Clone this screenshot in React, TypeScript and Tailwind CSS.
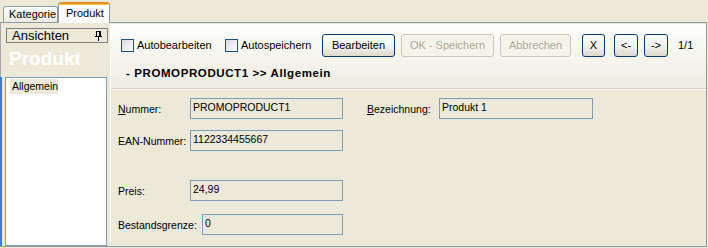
import React from "react";

const font = { fontFamily: '"Liberation Sans", Arial, sans-serif' };

function Checkbox({ label, width }: { label: string; width: string }) {
  return (
    <div className={`flex items-center ${width}`}>
      <div className="w-[13px] h-[13px] border border-[#1C5180] bg-gradient-to-br from-[#DCDBD5] to-[#FFFFFF]" />
      <span className="ml-[3px] text-[11px] leading-[13px] text-black">{label}</span>
    </div>
  );
}

function Btn({ children, w, disabled }: { children: React.ReactNode; w: string; disabled?: boolean }) {
  return (
    <div
      className={`${w} h-[23px] rounded-[3px] border flex items-center justify-center text-[11px] leading-[13px] ${
        disabled
          ? "border-[#C9C7BA] text-[#ACA899] bg-[#F5F4EA]"
          : "border-[#003C74] text-black bg-gradient-to-b from-[#FFFFFF] via-[#F4F3EE] to-[#DCD9CD]"
      }`}
    >
      {children}
    </div>
  );
}

function Field({ value, w }: { value: string; w: string }) {
  return (
    <div className={`${w} h-[21px] border border-[#7F9DB9] bg-[#ECE9D8] pl-[2px] pt-[2px] text-[10.5px] leading-[13px] text-black`}>
      {value}
    </div>
  );
}

export default function App() {
  return (
    <div className="w-[708px] h-[248px] bg-[#ECE9D8] text-black overflow-hidden" style={font}>
      {/* Tabs */}
      <div className="h-[22px] flex items-end pl-[3px]">
        <div className="w-[55px] h-[16px] border border-b-0 border-[#919B9C] rounded-t-[3px] bg-gradient-to-b from-[#FFFFFF] to-[#ECEBE6] text-[11px] leading-[14px] pl-[5px]">
          Kategorie
        </div>
        <div className="relative z-10 -mb-px w-[52px] h-[21px] border-x border-[#919B9C] rounded-t-[3px] bg-[#FCFCFE] overflow-hidden">
          <div className="h-[2px] bg-[#E68B2C]" />
          <div className="h-[1px] bg-[#FFC73C]" />
          <div className="text-[11px] leading-[14px] pl-[7px] pt-[1px]">Produkt</div>
        </div>
      </div>

      {/* Tab page */}
      <div className="w-[707px] h-[225px] border-t border-r border-b border-[#919B9C] flex">
        {/* Left column */}
        <div className="w-[110px] flex flex-col">
          <div className="border-l border-[#A7A6AA] pl-[5px] pt-[5px] pr-[2px]">
            <div className="w-[102px] h-[15px] border border-[#808080] flex items-center justify-between pl-[5px] pr-[5px]">
              <span className="text-[13px] leading-[13px]">Ansichten</span>
              <svg width="7" height="10" viewBox="0 0 7 10">
                <rect x="1.5" y="0.5" width="4" height="5" fill="none" stroke="#000" />
                <rect x="0" y="5" width="7" height="1" fill="#000" />
                <rect x="3" y="6" width="1" height="4" fill="#000" />
                <rect x="4" y="1" width="1" height="4" fill="#000" />
              </svg>
            </div>
            <div className="pt-[5px] pl-[3px] h-[34px] text-[19px] leading-[22px] font-bold text-white">Produkt</div>
          </div>
          <div className="flex-1 flex border-l-2 border-[#3D78DA]">
            <div className="ml-[3px] w-[102px] h-full border border-[#7F9DB9] bg-[#FFFFFF] pt-[1px] pl-[4px]">
              <div className="w-[48px] h-[15px] bg-[#ECE9D8] text-[10.5px] leading-[15px] pl-[2px]">Allgemein</div>
            </div>
          </div>
        </div>

        {/* Right panel */}
        <div className="flex-1 flex flex-col border-l border-t border-[#FFFFFF] mt-[1px]">
          <div className="h-[63px] bg-gradient-to-b from-[#FDFDFB] to-[#EFEDE2] pt-[9px]">
            <div className="flex items-center h-[23px]">
              <div className="w-[10px]" />
              <Checkbox label="Autobearbeiten" width="w-[104px]" />
              <Checkbox label="Autospeichern" width="w-[97px]" />
              <Btn w="w-[73px]">Bearbeiten</Btn>
              <div className="w-[6px]" />
              <Btn w="w-[93px]" disabled>OK - Speichern</Btn>
              <div className="w-[6px]" />
              <Btn w="w-[71px]" disabled>Abbrechen</Btn>
              <div className="w-[11px]" />
              <Btn w="w-[23px]">X</Btn>
              <div className="w-[9px]" />
              <Btn w="w-[24px]">&lt;-</Btn>
              <div className="w-[6px]" />
              <Btn w="w-[24px]">-&gt;</Btn>
              <span className="ml-[10px] text-[11px] leading-[13px]">1/1</span>
            </div>
            <div className="mt-[10px] pl-[15px] text-[11.5px] leading-[13px] font-bold tracking-[0.6px]">- PROMOPRODUCT1 &gt;&gt; Allgemein</div>
          </div>
          <div className="h-[1px] bg-[#D4D0C0]" />
          <div className="h-[1px] bg-[#FFFFFF]" />

          {/* Form */}
          <div className="flex-1 pl-[7px] pt-[8px] text-[10.5px] leading-[13px]">
            <div className="flex items-start">
              <div className="w-[72px] pt-[5px]">
                <span className="underline">N</span>ummer:
              </div>
              <Field value="PROMOPRODUCT1" w="w-[153px]" />
              <div className="w-[24px]" />
              <div className="w-[72px] pt-[5px]">
                <span className="underline">B</span>ezeichnung:
              </div>
              <Field value="Produkt 1" w="w-[154px]" />
            </div>
            <div className="flex items-start mt-[11px]">
              <div className="w-[72px] pt-[5px]">EAN-Nummer:</div>
              <Field value="1122334455667" w="w-[153px]" />
            </div>
            <div className="flex items-start mt-[29px]">
              <div className="w-[72px] pt-[5px]">Preis:</div>
              <Field value="24,99" w="w-[153px]" />
            </div>
            <div className="flex items-start mt-[13px]">
              <div className="w-[84px] pt-[5px]">Bestandsgrenze:</div>
              <Field value="0" w="w-[141px]" />
            </div>
          </div>
        </div>
      </div>
    </div>
  );
}
